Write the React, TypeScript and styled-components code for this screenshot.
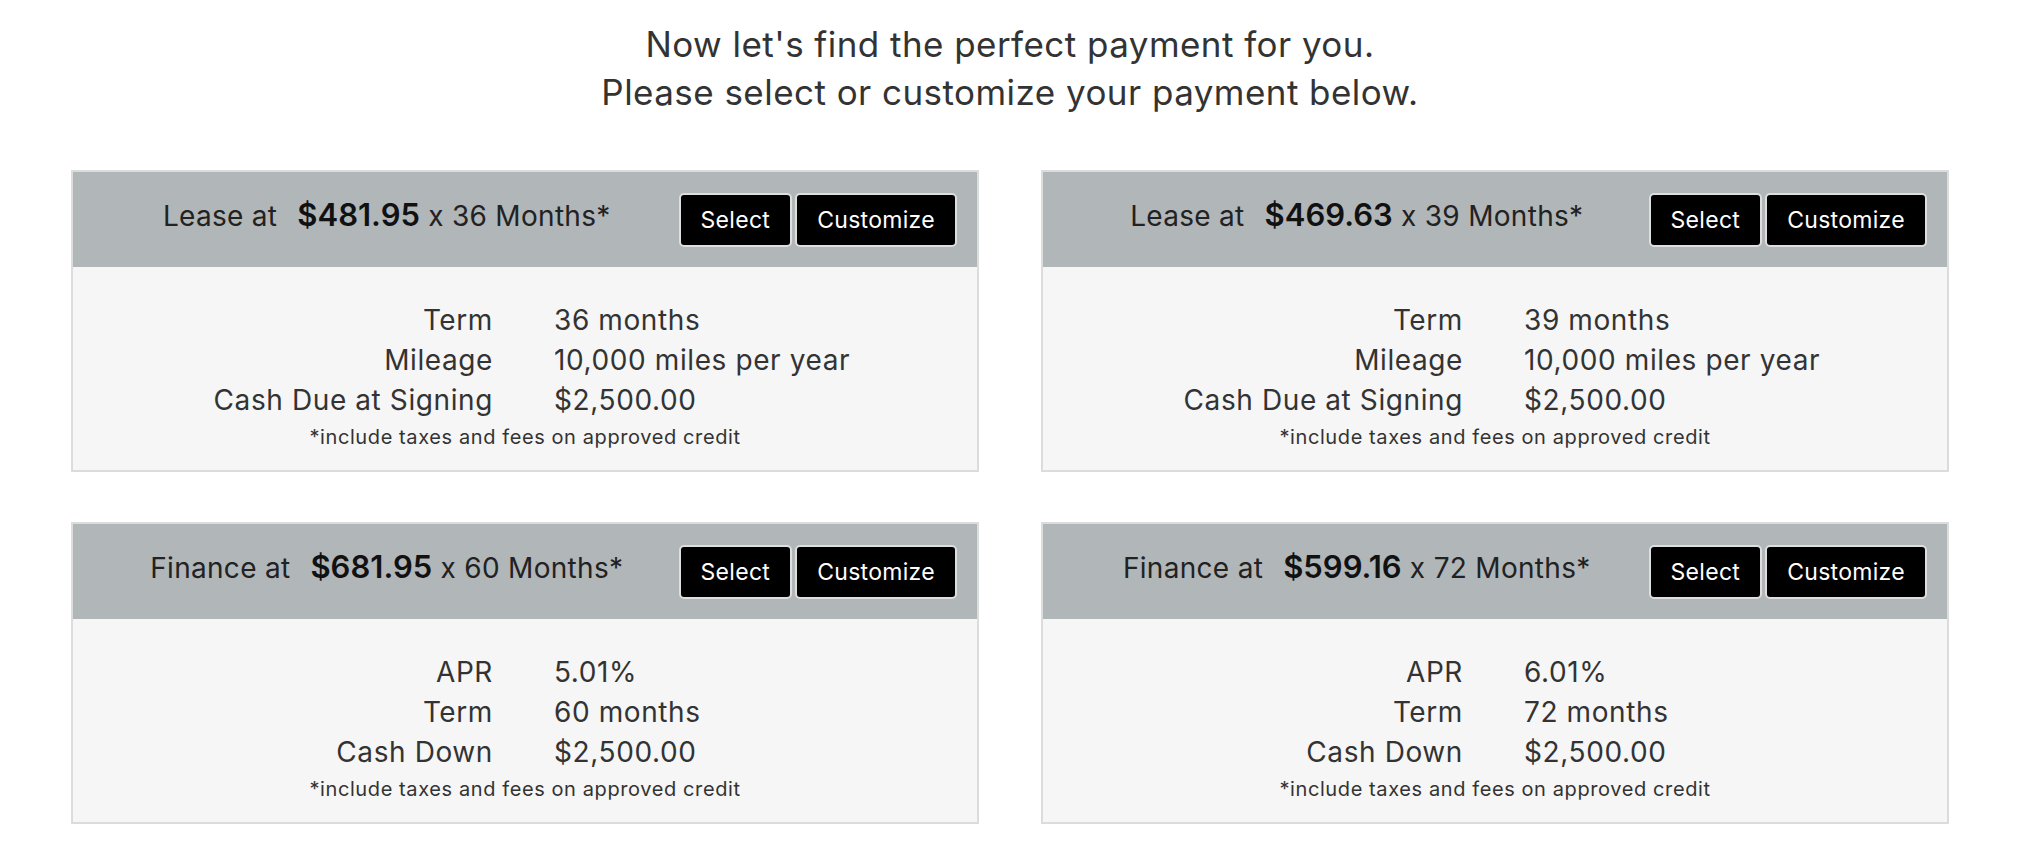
import * as React from "react";
import styled, { createGlobalStyle } from "styled-components";

interface Detail {
  label: string;
  value: string;
}

interface Offer {
  id: string;
  kind: string;
  payment: string;
  months: number;
  details: Detail[];
}

const offers: Offer[] = [
  {
    id: "lease-36",
    kind: "Lease",
    payment: "$481.95",
    months: 36,
    details: [
      { label: "Term", value: "36 months" },
      { label: "Mileage", value: "10,000 miles per year" },
      { label: "Cash Due at Signing", value: "$2,500.00" },
    ],
  },
  {
    id: "lease-39",
    kind: "Lease",
    payment: "$469.63",
    months: 39,
    details: [
      { label: "Term", value: "39 months" },
      { label: "Mileage", value: "10,000 miles per year" },
      { label: "Cash Due at Signing", value: "$2,500.00" },
    ],
  },
  {
    id: "finance-60",
    kind: "Finance",
    payment: "$681.95",
    months: 60,
    details: [
      { label: "APR", value: "5.01%" },
      { label: "Term", value: "60 months" },
      { label: "Cash Down", value: "$2,500.00" },
    ],
  },
  {
    id: "finance-72",
    kind: "Finance",
    payment: "$599.16",
    months: 72,
    details: [
      { label: "APR", value: "6.01%" },
      { label: "Term", value: "72 months" },
      { label: "Cash Down", value: "$2,500.00" },
    ],
  },
];

const OfferCard: React.FC<{ offer: Offer }> = ({ offer }) => (
  <Card>
    <CardHeader>
      <Title>
        <Kind>{offer.kind} at</Kind>
        <Price>{offer.payment}</Price> x {offer.months} Months*
      </Title>
      <Actions>
        <ActionButton type="button">Select</ActionButton>
        <ActionButton type="button">Customize</ActionButton>
      </Actions>
    </CardHeader>
    <CardBody>
      {offer.details.map((d) => (
        <DetailRow key={d.label}>
          <Label>{d.label}</Label>
          <Value>{d.value}</Value>
        </DetailRow>
      ))}
      <Footnote>*include taxes and fees on approved credit</Footnote>
    </CardBody>
  </Card>
);

const App: React.FC = () => (
  <>
    <GlobalStyle />
    <Page>
      <Intro>
        Now let's find the perfect payment for you.
        <br />
        Please select or customize your payment below.
      </Intro>
      <OfferGrid>
        {offers.map((o) => (
          <OfferCard key={o.id} offer={o} />
        ))}
      </OfferGrid>
    </Page>
  </>
);

export default App;

const GlobalStyle = createGlobalStyle`
  body {
    margin: 0;
    background: #fff;
    font-family: Inter, "Open Sans", sans-serif;
    color: #333;
  }
`;

const Page = styled.main`
  width: 2020px;
  padding-top: 20px;
`;

const Intro = styled.h2`
  margin: 0;
  text-align: center;
  font-size: 35px;
  letter-spacing: 0.45px;
  line-height: 48px;
  font-weight: 400;
  color: #333;
`;

const OfferGrid = styled.div`
  display: grid;
  grid-template-columns: 1fr 1fr;
  column-gap: 62px;
  row-gap: 50px;
  padding: 54px 71px 0;
`;

const Card = styled.section`
  border: 2px solid #dcdcdc;
  background: #f6f6f6;
`;

const CardHeader = styled.header`
  display: flex;
  align-items: center;
  height: 95px;
  padding: 0 20px 0 22px;
  background: #b1b6b9;
`;

const Title = styled.div`
  flex: 1;
  padding-bottom: 10px;
  text-align: center;
  font-size: 28px;
  letter-spacing: 0.3px;
  color: #222;
`;

const Kind = styled.span`
  margin-right: 20px;
`;

const Price = styled.span`
  font-size: 31px;
  font-weight: 600;
  letter-spacing: 0;
  color: #111;
`;

const Actions = styled.div`
  display: flex;
  gap: 3px;
`;

const ActionButton = styled.button`
  height: 54px;
  padding: 0 20px;
  background: #000;
  color: #fff;
  border: 2px solid #dedede;
  border-radius: 5px;
  font-family: inherit;
  font-size: 23px;
  letter-spacing: 0.3px;
  cursor: pointer;
`;

const CardBody = styled.div`
  padding: 33px 0 16px;
`;

const DetailRow = styled.div`
  display: grid;
  grid-template-columns: 1fr 1fr;
  font-size: 28px;
  letter-spacing: 0.6px;
  line-height: 40px;
  color: #333;
`;

const Label = styled.div`
  text-align: right;
  padding-right: 32px;
`;

const Value = styled.div`
  padding-left: 29px;
`;

const Footnote = styled.p`
  margin: 0;
  text-align: center;
  font-size: 20px;
  letter-spacing: 0.6px;
  line-height: 34px;
  color: #333;
`;
